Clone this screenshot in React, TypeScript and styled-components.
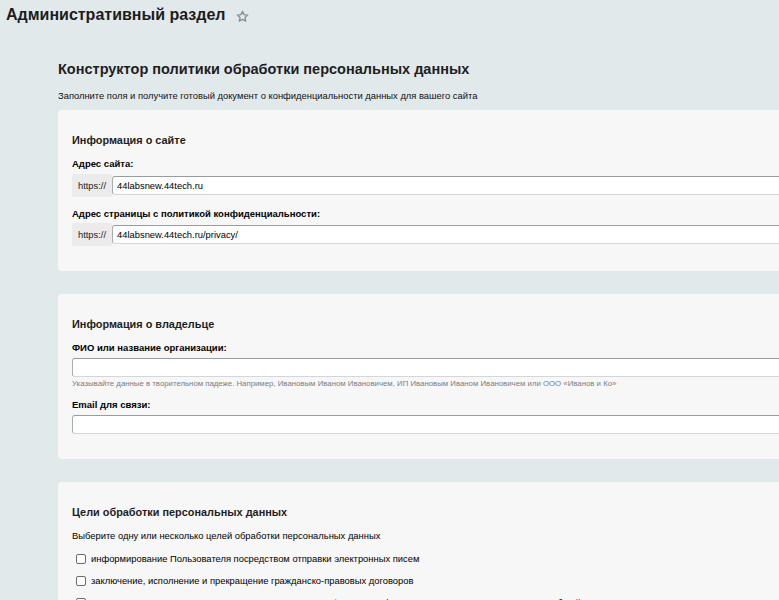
import React from 'react'
import styled, {createGlobalStyle} from 'styled-components'

const GlobalStyle = createGlobalStyle`
  html, body {
    margin: 0;
    padding: 0;
    overflow: hidden;
    background: #e1e9eb;
    font-family: "Liberation Sans", Arial, sans-serif;
    color: #000;
  }
`

const goals = [
    'информирование Пользователя посредством отправки электронных писем',
    'заключение, исполнение и прекращение гражданско-правовых договоров',
    'предоставление доступа Пользователю к сервисам, информации и/или материалам, содержащимся на веб-сайте',
]

const StarIcon = () => (
    <svg width="13" height="13" viewBox="0 0 24 24" fill="none" stroke="#8c9397" strokeWidth="2.6" strokeLinejoin="round">
        <path d="M12 2.5l2.9 6.1 6.6.8-4.9 4.6 1.3 6.6L12 17.3l-5.9 3.3 1.3-6.6-4.9-4.6 6.6-.8z"/>
    </svg>
)

const SiteField = ({label, value}: { label: string, value: string }) => (
    <Field>
        <Label>{label}</Label>
        <InputGroup>
            <Prefix>https://</Prefix>
            <Input defaultValue={value}/>
        </InputGroup>
    </Field>
)

export default function App() {
    return (
        <>
            <GlobalStyle/>
            <TopBar>
                <PageTitle>Административный раздел</PageTitle>
                <StarButton><StarIcon/></StarButton>
            </TopBar>
            <Content>
                <Heading>Конструктор политики обработки персональных данных</Heading>
                <Lead>Заполните поля и получите готовый документ о конфиденциальности данных для вашего сайта</Lead>

                <Card>
                    <CardTitle>Информация о сайте</CardTitle>
                    <SiteField label="Адрес сайта:" value="44labsnew.44tech.ru"/>
                    <SiteField label="Адрес страницы с политикой конфиденциальности:" value="44labsnew.44tech.ru/privacy/"/>
                </Card>

                <Card>
                    <CardTitle>Информация о владельце</CardTitle>
                    <Field>
                        <Label>ФИО или название организации:</Label>
                        <Input/>
                        <Hint>Указывайте данные в творительном падеже. Например, Ивановым Иваном Ивановичем, ИП Ивановым Иваном Ивановичем или ООО «Иванов и Ко»</Hint>
                    </Field>
                    <Field>
                        <Label>Email для связи:</Label>
                        <Input/>
                    </Field>
                </Card>

                <Card>
                    <CardTitle>Цели обработки персональных данных</CardTitle>
                    <Text>Выберите одну или несколько целей обработки персональных данных</Text>
                    {goals.map((goal, index) =>
                        <CheckRow key={index}>
                            <Box/>
                            <span>{goal}</span>
                        </CheckRow>
                    )}
                </Card>
            </Content>
        </>
    )
}

const TopBar = styled.div`
  display: flex;
  align-items: center;
  height: 30px;
  padding-left: 6px;
`

const PageTitle = styled.h1`
  margin: 0;
  font-size: 16px;
  font-weight: bold;
  color: #1c1c1c;
`

const StarButton = styled.span`
  display: flex;
  margin-left: 11px;
  margin-top: 2px;
`

const Content = styled.div`
  padding: 31px 0 0 58px;
`

const Heading = styled.h2`
  margin: 0;
  font-size: 14.5px;
  line-height: 17px;
  font-weight: bold;
  color: #1e1e1e;
`

const Lead = styled.p`
  margin: 12px 0 9px;
  font-size: 9.4px;
  line-height: 11px;
  color: #111;
`

const Card = styled.div`
  width: 800px;
  box-sizing: border-box;
  background: #f7f7f7;
  border-radius: 4px;
  padding: 24px 0 14px 14px;
  margin-bottom: 23px;
`

const CardTitle = styled.h3`
  margin: 0 0 11px;
  font-size: 10.9px;
  line-height: 13px;
  font-weight: bold;
  color: #1e1e1e;
`

const Field = styled.div`
  margin-bottom: 11px;
`

const Label = styled.div`
  font-size: 9.5px;
  line-height: 11px;
  font-weight: bold;
  margin-bottom: 4.5px;
`

const InputGroup = styled.div`
  display: flex;
  align-items: center;
`

const Prefix = styled.span`
  display: flex;
  align-items: center;
  justify-content: center;
  width: 40px;
  height: 23px;
  background: #ebebeb;
  border-radius: 2px;
  font-size: 9.4px;
  color: #222;
`

const Input = styled.input`
  flex: 1;
  display: block;
  width: 100%;
  box-sizing: border-box;
  height: 19px;
  margin: 0;
  padding: 0 4px;
  border: 1px solid #a9aeb1;
  border-top-color: #979ca0;
  border-bottom-color: #d3d7da;
  border-radius: 3px;
  background: #fff;
  font-family: "Liberation Sans", Arial, sans-serif;
  font-size: 9.4px;
  color: #000;
`

const Hint = styled.div`
  margin-top: 2.5px;
  font-size: 7.8px;
  line-height: 9px;
  color: #7d7d7d;
`

const Text = styled.p`
  margin: 0 0 7px;
  font-size: 9.4px;
  line-height: 11px;
`

const CheckRow = styled.label`
  display: flex;
  align-items: center;
  gap: 5px;
  height: 22px;
  padding-left: 4px;
  font-size: 9.4px;
`

const Box = styled.span`
  width: 8px;
  height: 8px;
  border: 1px solid #6b6b6b;
  border-radius: 2px;
  background: #fff;
`
